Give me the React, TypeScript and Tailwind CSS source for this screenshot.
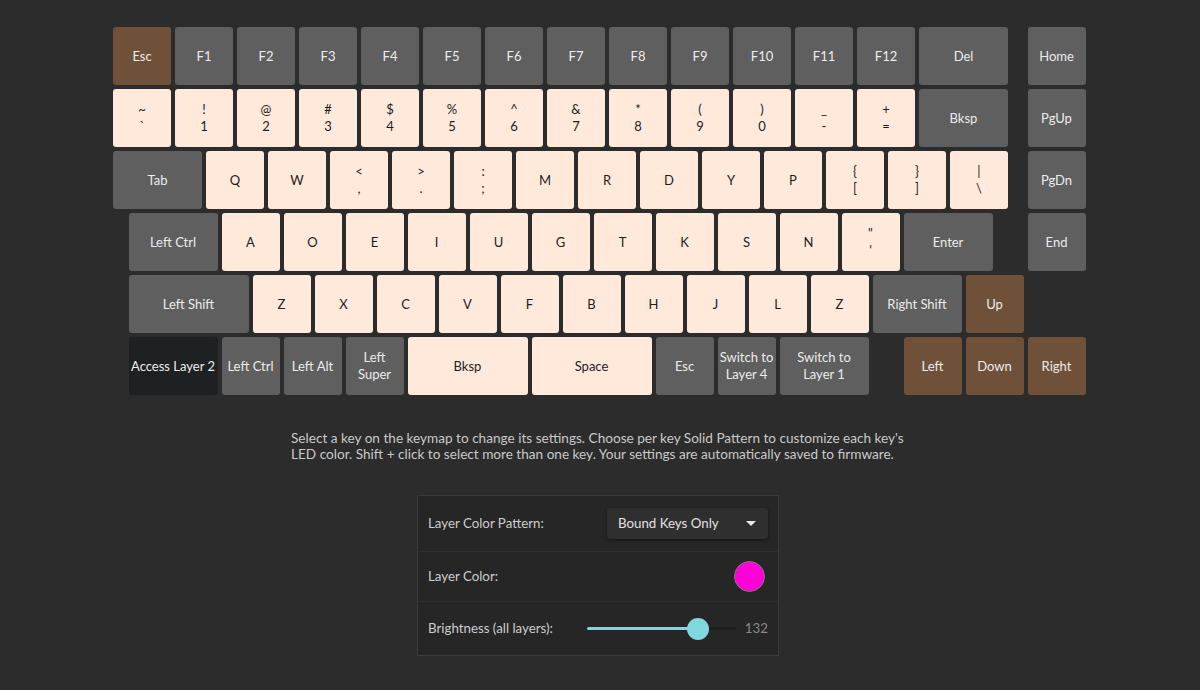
import React from "react";

type Tone = "gray" | "peach" | "brown" | "dark";

interface KeyDef {
  label?: string;
  top?: string;
  bottom?: string;
  u?: number;
  tone?: Tone;
  spacer?: boolean;
}

// outer slot widths: 1u = 62px (58px key + 4px gap)
const slotWidth: Record<string, string> = {
  "0.25": "w-[15.5px]",
  "0.5": "w-[31px]",
  "1": "w-[62px]",
  "1.5": "w-[93px]",
  "2": "w-[124px]",
};

const toneClass: Record<Tone, string> = {
  gray: "bg-[#5f5f5f] text-[#ececec]",
  peach: "bg-[#ffe9da] text-[#1d1d1d]",
  brown: "bg-[#6f5139] text-[#ececec]",
  dark: "bg-[#1f2022] text-[#ececec]",
};

const g = (label: string, u = 1): KeyDef => ({ label, u, tone: "gray" });
const b = (label: string, u = 1): KeyDef => ({ label, u, tone: "brown" });
const p = (label: string): KeyDef => ({ label, u: 1, tone: "peach" });
const s = (top: string, bottom: string): KeyDef => ({ top, bottom, u: 1, tone: "peach" });
const gap = (u: number): KeyDef => ({ spacer: true, u });

const rows: KeyDef[][] = [
  [
    b("Esc"),
    g("F1"), g("F2"), g("F3"), g("F4"), g("F5"), g("F6"),
    g("F7"), g("F8"), g("F9"), g("F10"), g("F11"), g("F12"),
    g("Del", 1.5),
    gap(0.25),
    g("Home"),
  ],
  [
    s("~", "`"), s("!", "1"), s("@", "2"), s("#", "3"), s("$", "4"), s("%", "5"),
    s("^", "6"), s("&", "7"), s("*", "8"), s("(", "9"), s(")", "0"), s("_", "-"),
    s("+", "="),
    g("Bksp", 1.5),
    gap(0.25),
    g("PgUp"),
  ],
  [
    g("Tab", 1.5),
    p("Q"), p("W"), s("<", ","), s(">", "."), s(":", ";"), p("M"), p("R"),
    p("D"), p("Y"), p("P"), s("{", "["), s("}", "]"), s("|", "\\"),
    gap(0.25),
    g("PgDn"),
  ],
  [
    gap(0.25),
    g("Left Ctrl", 1.5),
    p("A"), p("O"), p("E"), p("I"), p("U"), p("G"), p("T"), p("K"), p("S"), p("N"),
    s("\"", "'"),
    g("Enter", 1.5),
    gap(0.5),
    g("End"),
  ],
  [
    gap(0.25),
    g("Left Shift", 2),
    p("Z"), p("X"), p("C"), p("V"), p("F"), p("B"), p("H"), p("J"), p("L"), p("Z"),
    g("Right Shift", 1.5),
    b("Up"),
  ],
  [
    gap(0.25),
    { label: "Access Layer 2", u: 1.5, tone: "dark" },
    g("Left Ctrl"), g("Left Alt"), g("Left\nSuper"),
    { label: "Bksp", u: 2, tone: "peach" },
    { label: "Space", u: 2, tone: "peach" },
    g("Esc"), g("Switch to\nLayer 4"), g("Switch to\nLayer 1", 1.5),
    gap(0.5),
    b("Left"), b("Down"), b("Right"),
  ],
];

function Key({ k }: { k: KeyDef }) {
  const w = slotWidth[String(k.u ?? 1)];
  if (k.spacer) return <div className={`${w} shrink-0`} />;
  return (
    <div className={`${w} shrink-0 pr-[4px]`}>
      <div
        className={`h-[58px] rounded-[3px] flex flex-col items-center justify-center text-center text-[13px] leading-[17px] whitespace-pre-line ${toneClass[k.tone ?? "gray"]}`}
      >
        {k.top !== undefined ? (
          <>
            <span>{k.top}</span>
            <span>{k.bottom}</span>
          </>
        ) : (
          <span>{k.label}</span>
        )}
      </div>
    </div>
  );
}

export default function App() {
  return (
    <div
      className="w-[1200px] h-[690px] bg-[#2c2c2c] overflow-hidden text-[#cfcfcf]"
      style={{ fontFamily: "'Lato', 'Open Sans', sans-serif" }}
    >
      <div className="pt-[27px] pl-[113px] flex flex-col gap-[4px]">
        {rows.map((row, i) => (
          <div key={i} className="flex">
            {row.map((k, j) => (
              <Key key={j} k={k} />
            ))}
          </div>
        ))}
      </div>

      <p className="mt-[35px] ml-[291px] w-[618px] text-[13.6px] leading-[16px] text-[#c9c9c9]">
        Select a key on the keymap to change its settings. Choose per key Solid Pattern to customize each key's
        LED color. Shift + click to select more than one key. Your settings are automatically saved to firmware.
      </p>

      <div className="mt-[33px] ml-[417px] w-[362px] border border-[#3b3b3b] bg-[#262626] text-[13.3px] text-[#cdcdcd]">
        <div className="h-[56px] flex items-center justify-between pl-[10px] pr-[10px] border-b border-[#2f2f2f]">
          <span>Layer Color Pattern:</span>
          <div className="w-[161px] h-[31px] rounded-[3px] bg-[#2f2f2f] shadow-[0_1px_3px_rgba(0,0,0,0.5)] flex items-center justify-between pl-[11px] pr-[12px] text-[#e2e2e2]">
            <span>Bound Keys Only</span>
            <svg width="10" height="6" viewBox="0 0 10 6">
              <path d="M0 0 L10 0 L5 5 Z" fill="#e8e8e8" />
            </svg>
          </div>
        </div>
        <div className="h-[50px] flex items-center justify-between pl-[10px] pr-[13px] border-b border-[#2f2f2f]">
          <span>Layer Color:</span>
          <div className="w-[31px] h-[31px] rounded-full bg-[#ff00d6] border border-[#7a7a7a]" />
        </div>
        <div className="h-[53px] flex items-center pl-[10px] pr-[10px]">
          <span className="w-[159px]">Brightness (all layers):</span>
          <div className="relative w-[149px] h-[22px] flex items-center">
            <div className="w-full h-[3px] rounded-full bg-[#1d1d1d]" />
            <div className="absolute left-0 w-[111px] h-[3px] rounded-full bg-[#7fd8de]" />
            <div className="absolute left-[100px] w-[22px] h-[22px] rounded-full bg-[#7fd8de]" />
          </div>
          <span className="ml-auto text-[#8a8a8a]">132</span>
        </div>
      </div>
    </div>
  );
}
